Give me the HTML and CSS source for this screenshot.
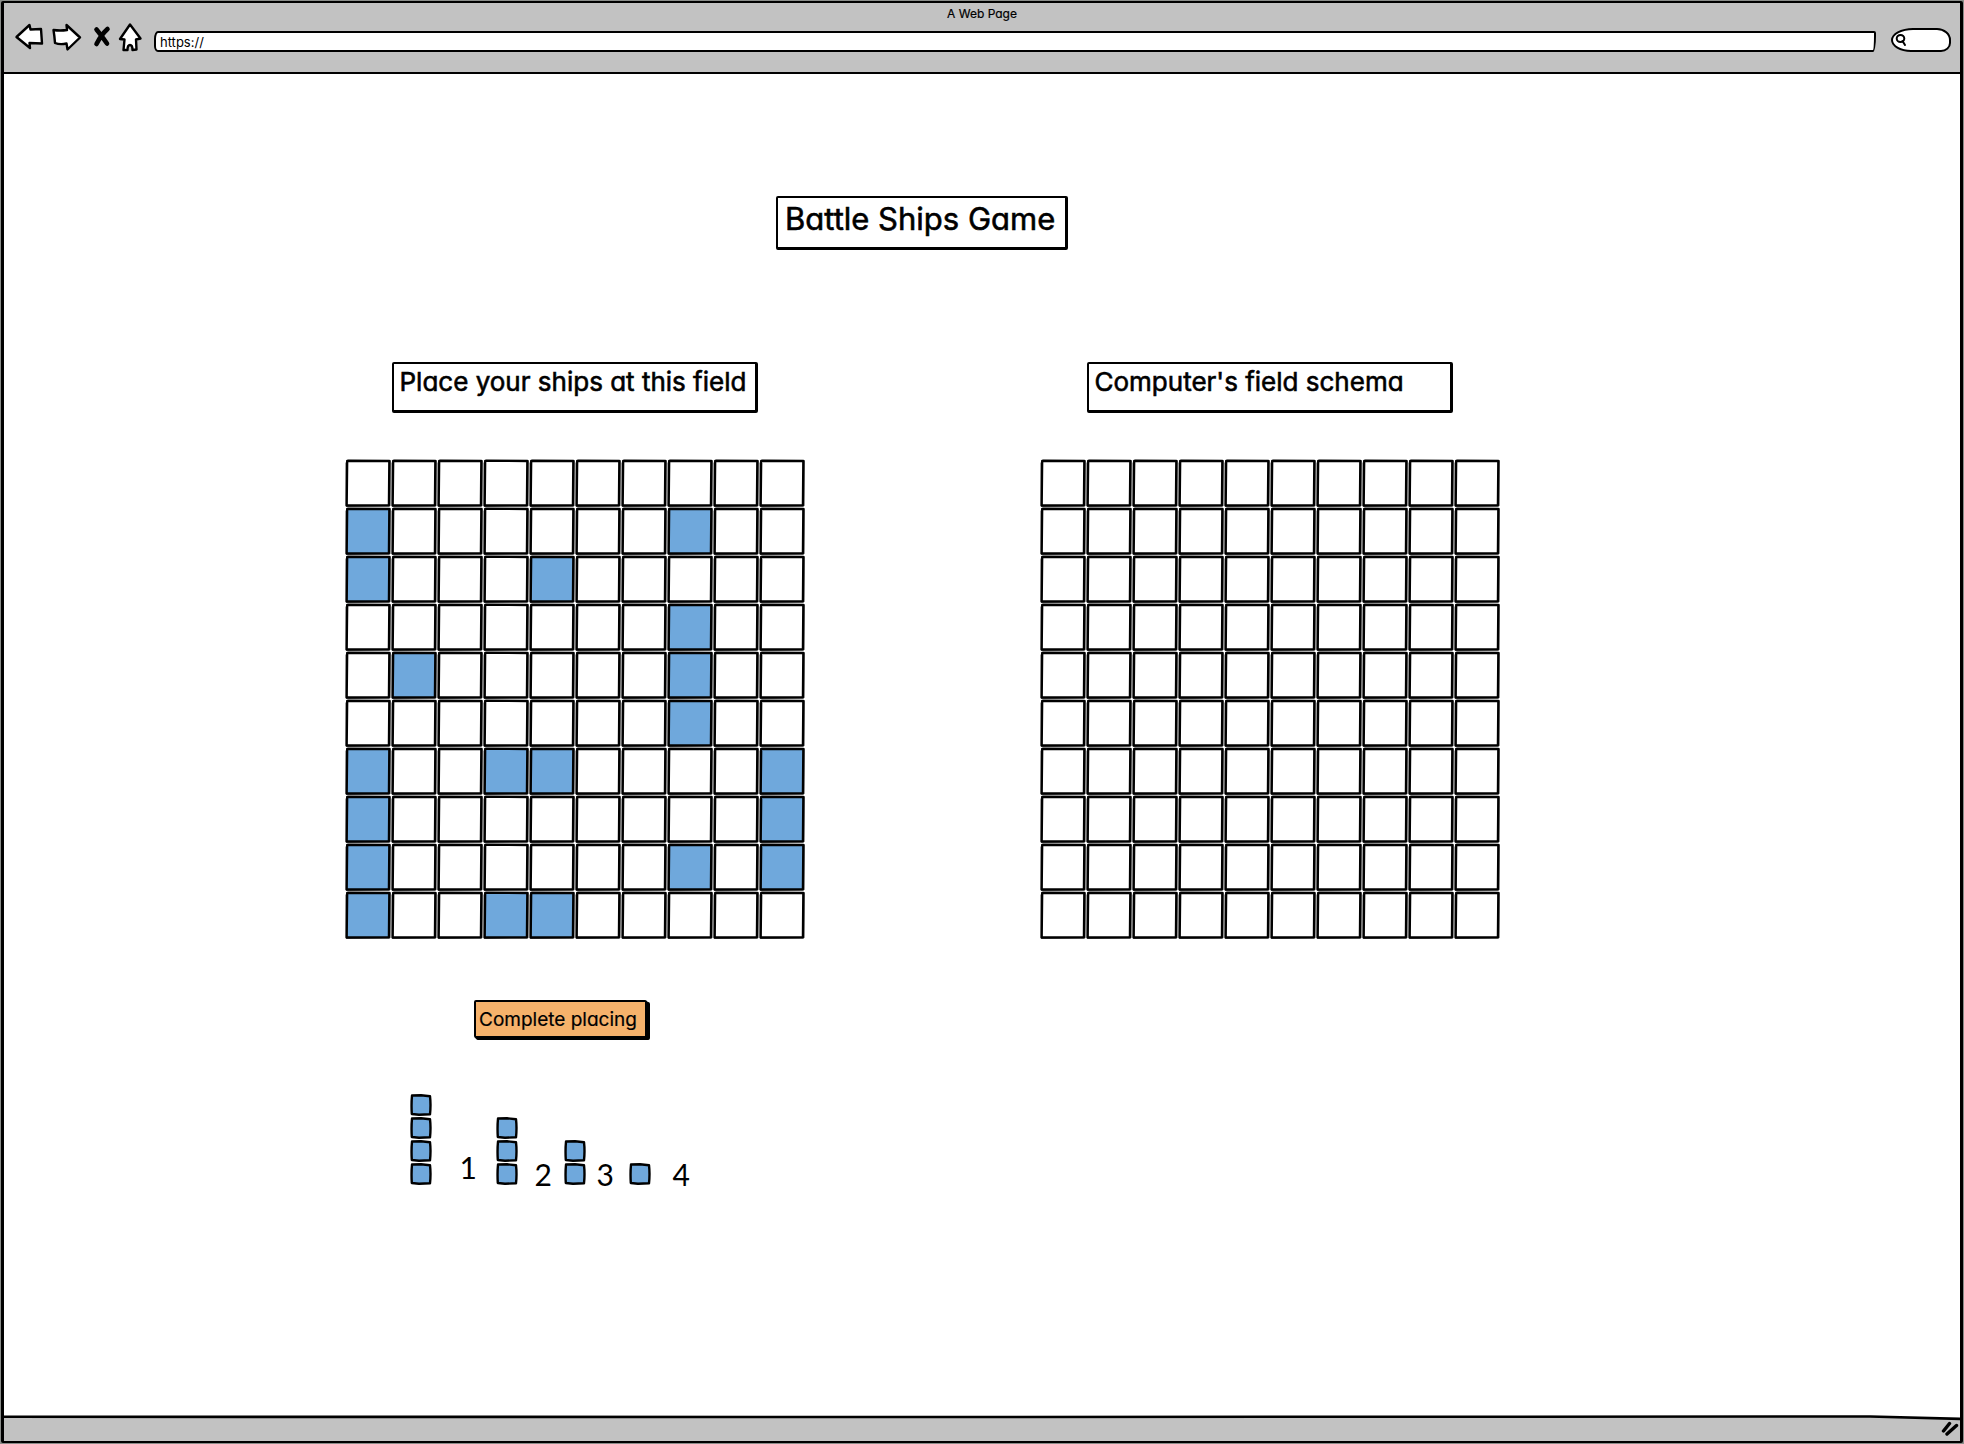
FILE: index.html
```
<!DOCTYPE html>
<html lang="en">
<head>
  <meta charset="utf-8">
  <title>Battle Ships Game</title>
  <link rel="stylesheet" href="styles.css">
</head>
<body>
  <div class="browser">
    <header class="chrome">
      <p class="chrome-title">A Web Page</p>
      <div class="toolbar">
        <nav class="nav-buttons" aria-label="Browser">
          <button type="button" class="nav-button" aria-label="Back">
            <svg width="30" height="30" viewBox="0 0 30 30"><path d="M2.5 15 L15.5 3 L16.5 7.5 L27 7 L28 21.500 L15.500 21 L16 26 Z"/></svg>
          </button>
          <button type="button" class="nav-button" aria-label="Forward">
            <svg width="30" height="30" viewBox="0 0 30 30"><path d="M1.500 8 Q8 9 15 8 L14.500 3 L28 15.500 L15.500 27.500 L14.500 21.500 Q8 23 3 21 Q2.500 14 1.500 8 Z"/></svg>
          </button>
          <button type="button" class="nav-button nav-button-narrow" aria-label="Stop">
            <svg width="18" height="30" viewBox="0 0 18 30"><path class="cross" d="M3.500 7.500 Q8 13 14 21.500 M14.500 7 Q8 13 3.500 22"/></svg>
          </button>
          <button type="button" class="nav-button" aria-label="Home">
            <svg width="26" height="30" viewBox="0 0 26 30"><path d="M13 2.500 L23.500 16.500 L19 17.500 L19.500 27.500 L15.500 28 Q15.500 23 13 23 Q10.500 23 10.500 28 L6.500 28 L7.500 17.500 L3 17 Z"/></svg>
          </button>
        </nav>
        <input class="address" type="text" value="https://" aria-label="Address">
        <label class="search">
          <svg width="12" height="14" viewBox="0 0 12 14"><ellipse cx="5.500" cy="5.500" rx="3.800" ry="3.500"/><path d="M7.500 8 L10 12"/></svg>
          <input type="search" aria-label="Search">
        </label>
      </div>
    </header>

    <main class="page">
      <h1 class="box title">Battle Ships Game</h1>
      <div class="fields">
        <section class="field">
          <h2 class="box caption">Place your ships at this field</h2>
          <div class="board" id="player"></div>
          <div class="controls">
            <button type="button" class="complete">Complete placing</button>
            <div class="legend">
              <div class="ship"><i></i><i></i><i></i><i></i></div>
              <span class="count raised">1</span>
              <div class="ship"><i></i><i></i><i></i></div>
              <span class="count">2</span>
              <div class="ship"><i></i><i></i></div>
              <span class="count">3</span>
              <div class="ship"><i></i></div>
              <span class="count">4</span>
            </div>
          </div>
        </section>
        <section class="field">
          <h2 class="box caption">Computer's field schema</h2>
          <div class="board" id="computer"></div>
        </section>
      </div>
    </main>

    <footer class="status">
      <svg class="grip" width="18" height="16" viewBox="0 0 18 16"><path d="M2.500 11 L8.500 3.500 M6 14 L15.500 5.500"/></svg>
    </footer>
  </div>
  <script src="board.js"></script>
</body>
</html>
```
FILE: board.js
```
// Each string is a row of the field; "#" marks a square taken by a ship.
const playerRows = [
  "..........",
  "#......#..",
  "#...#.....",
  ".......#..",
  ".#.....#..",
  ".......#..",
  "#..##....#",
  "#........#",
  "#......#.#",
  "#..##....."
];
const emptyRows = Array(10).fill("..........");

function drawBoard(id, rows) {
  const board = document.getElementById(id);
  rows.forEach((row, r) => {
    [...row].forEach((mark, c) => {
      const cell = document.createElement("button");
      cell.type = "button";
      cell.className = mark === "#" ? "cell taken" : "cell";
      cell.setAttribute("aria-label", `Row ${r + 1}, column ${c + 1}`);
      board.append(cell);
    });
  });
}

drawBoard("player", playerRows);
drawBoard("computer", emptyRows);
```
FILE: styles.css
```
* {
  box-sizing: border-box;
}

body {
  margin: 0;
  padding: 1px;
  background: #8a8d8a;
  color: #000;
  font-family: Inter, "Liberation Sans", sans-serif;
  font-feature-settings: "cv11";
}

button,
input {
  font: inherit;
  font-feature-settings: inherit;
  color: inherit;
}

h1,
h2,
p {
  margin: 0;
}

.browser {
  display: flex;
  flex-direction: column;
  min-height: calc(100vh - 2px);
  border: 2px solid #000;
  border-left-width: 3px;
  border-right-width: 3px;
  border-radius: 2px;
  background: #fff;
}

/* Browser chrome */

.chrome {
  height: 71px;
  border-bottom: 2px solid #000;
  background: #c2c2c2;
}

.chrome-title {
  padding-top: 3px;
  font-size: 12px;
  line-height: 16px;
  text-align: center;
  -webkit-text-stroke: 0.2px #000;
}

.toolbar {
  display: flex;
  align-items: flex-end;
  padding: 0 9px 0 10px;
}

.nav-buttons {
  display: flex;
  gap: 8px;
  margin-right: 11px;
}

.nav-button {
  display: flex;
  padding: 0;
  border: 0;
  background: none;
}

.nav-button svg {
  fill: #fff;
  stroke: #000;
  stroke-width: 2.4;
  stroke-linejoin: round;
  stroke-linecap: round;
}

.nav-button-narrow {
  margin-left: 3px;
  margin-right: -2px;
}

.nav-button .cross {
  fill: none;
  stroke-width: 4.6;
}

.address {
  flex: 1;
  min-width: 0;
  height: 21px;
  margin-right: 15px;
  padding: 0 4px;
  border: 2px solid #000;
  border-radius: 4px 2px 3px 4px / 8px 2px 16px 6px;
  background: #fff;
  font-size: 13px;
}

.search {
  display: flex;
  align-items: center;
  width: 60px;
  height: 24px;
  padding-left: 2px;
  border: 2px solid #000;
  border-radius: 22px 14px 10px 20px / 12px 12px 9px 12px;
  background: #fff;
}

.search svg {
  flex: none;
  fill: none;
  stroke: #000;
  stroke-width: 2;
  stroke-linecap: round;
}

.search input {
  width: 36px;
  min-width: 0;
  height: 16px;
  padding: 0;
  border: 0;
  background: none;
  font-size: 12px;
}

/* Game */

.page {
  flex: 1;
  display: flex;
  flex-direction: column;
  align-items: center;
  padding: 122px 120px 60px 0;
}

.box {
  border: 3px solid #000;
  border-width: 2px 3px 3px 2px;
  border-radius: 2px;
  background: #fff;
  font-weight: 400;
  -webkit-text-stroke: 0.6px #000;
}

.title {
  width: 292px;
  padding: 2px 7px 10px;
  font-size: 31px;
  line-height: 37px;
  white-space: nowrap;
}

.fields {
  display: flex;
  justify-content: space-between;
  width: 100%;
  max-width: 1155px;
  margin-top: 112px;
}

.field {
  width: 460px;
}

.caption {
  width: 366px;
  margin: 0 auto 46px;
  padding: 2px 6px 12px;
  font-size: 26px;
  line-height: 32px;
  white-space: nowrap;
}

.board {
  display: grid;
  grid-template-columns: repeat(10, 46px);
  grid-auto-rows: 48px;
}

.cell {
  padding: 0;
  border: 0;
  background: url("data:image/svg+xml,%3Csvg xmlns='http://www.w3.org/2000/svg' viewBox='0 0 46 48'%3E%3Cpath d='M1 4 L2.500 1 L45.300 1.500 L45 47 L1 47.300 Z' fill='none' stroke='%23444'/%3E%3Cpath d='M2.200 1.800 L44.300 2 L43.900 46.300 L1.700 46.500 Z' fill='white' stroke='black' stroke-width='2.300' stroke-linejoin='round'/%3E%3C/svg%3E") center / 46px 48px no-repeat;
}

.cell.taken {
  background-image: url("data:image/svg+xml,%3Csvg xmlns='http://www.w3.org/2000/svg' viewBox='0 0 46 48'%3E%3Cpath d='M1 4 L2.500 1 L45.300 1.500 L45 47 L1 47.300 Z' fill='none' stroke='%23444'/%3E%3Cpath d='M2.200 1.800 L44.300 2 L43.900 46.300 L1.700 46.500 Z' fill='%236fa8dc' stroke='black' stroke-width='2.300' stroke-linejoin='round'/%3E%3C/svg%3E");
}

.controls {
  display: flex;
  flex-direction: column;
  width: 302px;
  margin: 61px 0 0 65px;
}

.complete {
  align-self: center;
  height: 38px;
  padding: 0 8px 0 3px;
  border: 2px solid #000;
  border-radius: 2px;
  background: #f6b26b;
  box-shadow: 1px 1px 0 #000, 2px 2px 0 #000, 3px 2px 0 #000;
  font-size: 19px;
  white-space: nowrap;
  -webkit-text-stroke: 0.2px #000;
}

.legend {
  display: grid;
  grid-template-columns: 50px 36px 39px 29px 33px 32px 44px auto;
  align-items: end;
  margin-top: 56px;
}

.ship {
  display: flex;
  flex-direction: column;
  gap: 1px;
}

.ship i {
  width: 22px;
  height: 22px;
  background: url("data:image/svg+xml,%3Csvg xmlns='http://www.w3.org/2000/svg' viewBox='0 0 22 22'%3E%3Cpath d='M2 1.500 L11 1.300 L20 2.200 Q21 11 20 20.300 L9 20.800 L1.800 20 Q1.200 10 2 1.500 Z' fill='%236fa8dc' stroke='black' stroke-width='2.400' stroke-linejoin='round'/%3E%3C/svg%3E") center / 22px 22px no-repeat;
}

.count {
  font-family: Lato, "Liberation Sans", sans-serif;
  font-size: 30px;
  line-height: 22px;
}

.raised {
  margin-bottom: 7px;
}

/* Status bar */

.status {
  display: flex;
  align-items: center;
  justify-content: flex-end;
  height: 26px;
  background: url("data:image/svg+xml,%3Csvg xmlns='http://www.w3.org/2000/svg' viewBox='0 0 1960 26' preserveAspectRatio='none'%3E%3Cpath d='M-5 1.800 L900 2 L1870 1.500 L1965 4 L1965 30 L-5 30 Z' fill='%23c2c2c2' stroke='black' stroke-width='2.600'/%3E%3C/svg%3E") center / 100% 100% no-repeat;
}

.grip {
  margin-right: 1px;
  fill: none;
  stroke: #000;
  stroke-width: 3.4;
  stroke-linecap: round;
}
```
